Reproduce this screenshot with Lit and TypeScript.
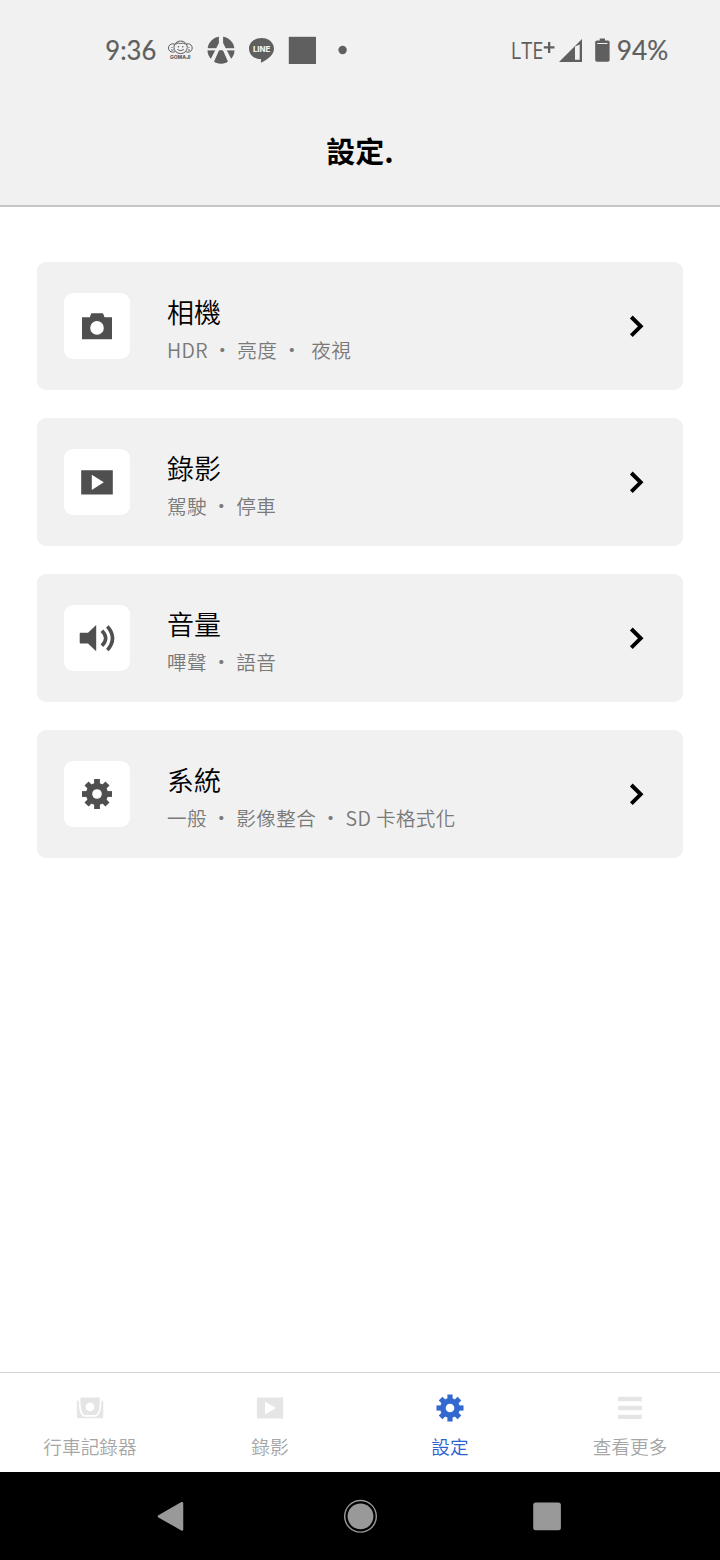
import { LitElement, html, css, svg } from "lit";
import { customElement, property } from "lit/decorators.js";

const gear = svg`
  <mask id="gear-hole"><rect x="-16" y="-16" width="32" height="32" fill="#fff"/><circle r="4.800" fill="#000"/></mask>
  <g mask="url(#gear-hole)" fill="currentColor">
    <circle r="11"/>
    <rect x="-2.900" y="-15" width="5.800" height="30"/>
    <rect x="-15" y="-2.900" width="30" height="5.800"/>
    <g transform="rotate(45)">
      <rect x="-2.900" y="-14.800" width="5.800" height="29.600"/>
      <rect x="-14.800" y="-2.900" width="29.600" height="5.800"/>
    </g>
  </g>`;

const video = svg`<path fill="currentColor" fill-rule="evenodd" d="M-15.800-11.700H15.800V12.500H-15.800ZM-5.200-7.300V8.100L6.800 .3Z"/>`;

const glyphs: Record<string, unknown> = {
  gear,
  video,
  playback: svg`<path fill="currentColor" fill-rule="evenodd" d="M-14.600-11.700H14.600V11.700H-14.600ZM-5.500-7V7.300L6.600 0Z"/>`,
  camera: svg`<path fill="currentColor" fill-rule="evenodd" d="M-15-8.700H-7.200L-6-12.100Q-5.800-12.700-5.200-12.700H5.400Q6-12.700 6.300-12.100L7.500-8.700H15V13.300H-15ZM0-4.900A6.800 6.800 0 1 0 0 8.700A6.800 6.800 0 1 0 0-4.900Z"/>`,
  volume: svg`
    <path fill="currentColor" d="M-17.300-4.300Q-17.300-5.300-16.300-5.300H-9L-.8-13V13.200L-9 5.600H-16.300Q-17.300 5.600-17.300 4.600Z"/>
    <path fill="none" stroke="currentColor" stroke-width="3.600" d="M4.900-7.300Q12.500 .2 4.900 7.700M10.400-11.700Q20.600 .2 10.400 12.100"/>`,
  recorder: svg`
    <path fill="currentColor" fill-rule="evenodd" d="M-9.500-11.700H10C10.700-11.700 10.900-11 10.900-10C10.800 0 9.800 7.800 5 7.800H-5C-9.600 7.800-10.600 0-10.700-10C-10.700-11-10.300-11.700-9.500-11.700ZM0-6A4.800 4.800 0 1 0 0 3.600A4.800 4.800 0 1 0 0-6Z"/>
    <path fill="currentColor" d="M-14.600-8.500L-12.500-7.800C-12.300 2-11 9.700-5 9.700H5C11 9.700 12.400 2 12.700-7.800L14.700-8.500V9.700Q14.700 11.500 12.900 11.500H-12.800Q-14.600 11.500-14.600 9.700Z"/>`,
  menu: svg`<path fill="currentColor" d="M-13.200-12.400H13.200V-7.600H-13.200ZM-13.200-2.400H13.200V2.400H-13.200ZM-13.200 7.400H13.200V12.200H-13.200Z"/>`,
};

@customElement("app-glyph")
class AppGlyph extends LitElement {
  static styles = css`
    :host { display: block; line-height: 0; }
    svg { display: block; width: 100%; height: 100%; }
  `;
  @property() name = "gear";
  render() {
    return html`<svg viewBox="-20 -20 40 40">${glyphs[this.name]}</svg>`;
  }
}

@customElement("status-bar")
class StatusBar extends LitElement {
  static styles = css`
    :host { display: block; height: 100px; }
    svg { display: block; }
    .clock, .percent { font-family: "Lato", sans-serif; font-weight: 400; }
    .network { font-family: "Open Sans", sans-serif; }
    .brand { font-family: "Inter", sans-serif; font-weight: 800; }
  `;
  render() {
    return html`<svg width="720" height="100" viewBox="0 0 720 100" fill="#5f5f5f">
      <text class="clock" x="105.300" y="59.800" font-size="26" textLength="51" lengthAdjust="spacingAndGlyphs" stroke="#5f5f5f" stroke-width=".2">9:36</text>

      <g fill="#f1f1f1" stroke="#5f5f5f" stroke-width="1">
        <circle cx="172.700" cy="48" r="4.200"/><circle cx="188" cy="48" r="4.200"/>
        <ellipse cx="180.600" cy="47.300" rx="6.700" ry="6.300"/>
        <path fill="none" d="M175.500 44.300Q178.300 42 180.600 43.600Q183 42 185.500 44.300M177.500 49.500Q180.600 52 183.800 49.500M171 49.700Q172.500 51 173.600 49.700M188 49.700Q189 51 190 49.700"/>
      </g>
      <circle cx="178.400" cy="46.800" r=".8"/><circle cx="182.800" cy="46.800" r=".8"/>
      <circle cx="172" cy="47.500" r=".6"/><circle cx="189" cy="47.500" r=".6"/>
      <text class="brand" x="170" y="59.200" font-size="5.100" textLength="20.500" lengthAdjust="spacingAndGlyphs">GOMAJI</text>

      <circle cx="221" cy="50" r="13.500"/>
      <path d="M207 49.300H235" stroke="#f1f1f1" stroke-width="2.200"/>
      <path fill="#f1f1f1" d="M218.900 36H223.100V43L232.500 61.500L229 64L222.800 50H219.200L213 64L209.500 61.500L218.900 43Z"/>
      <path d="M219.600 50.500H222.400L227.300 62Q221 65 214.700 62Z"/>

      <path d="M261.500 38C268.700 38 274 42.700 274 48.700C274 55 267.500 59 262.200 62.200C261 62.800 260.700 62 261 60.400L261.200 59.300C254.300 59.200 249 54.700 249 48.700C249 42.700 254.300 38 261.500 38Z"/>
      <text class="brand" x="252.900" y="51.900" font-size="8" fill="#f1f1f1" textLength="17.500" lengthAdjust="spacingAndGlyphs">LINE</text>
      <rect x="288.800" y="36.800" width="27.200" height="27.200"/>
      <circle cx="342.600" cy="50" r="4.200"/>

      <text class="network" x="510.800" y="58.500" font-size="23" textLength="32.500" lengthAdjust="spacingAndGlyphs">LTE</text>
      <path d="M548 42H550.300V46.200H554.500V48.500H550.300V53H548V48.500H543.800V46.200H548Z"/>
      <path fill-rule="evenodd" d="M582 39V62H559ZM575 46.500V59.800H579.700V44.600Z"/>
      <path fill-rule="evenodd" d="M599.700 38.500H605V40.500H608Q609.600 40.500 609.600 42V60Q609.600 61.800 608 61.800H597Q595.200 61.800 595.200 60V42Q595.200 40.500 597 40.500H599.700ZM597.300 43V44H607.500V43Z"/>
      <text class="percent" x="616.700" y="59.800" font-size="26" textLength="51.500" lengthAdjust="spacingAndGlyphs" stroke="#5f5f5f" stroke-width=".2">94%</text>
    </svg>`;
  }
}

@customElement("setting-card")
class SettingCard extends LitElement {
  static styles = css`
    :host { display: flex; align-items: center; box-sizing: border-box; height: 128.300px; padding: 0 38px 0 27.300px; background: #f1f1f1; border-radius: 9px; }
    .tile { display: grid; place-items: center; width: 66px; height: 66px; border-radius: 9px; background: #fff; color: #4f4f4f; }
    .glyph { width: 40px; height: 40px; }
    .copy { flex: 1; margin-left: 37px; padding-top: 3.500px; white-space: pre; }
    .title { font-size: 27px; line-height: 40px; font-weight: 350; color: #000; }
    .detail { font-size: 19.600px; line-height: 28px; letter-spacing: .36px; font-weight: 350; color: #797979; margin-top: 4px; }
    .chevron { display: block; width: 16px; height: 24px; }
  `;
  @property() icon = "";
  @property() heading = "";
  @property() detail = "";
  render() {
    return html`
      <div class="tile"><app-glyph class="glyph" name=${this.icon}></app-glyph></div>
      <div class="copy"><div class="title">${this.heading}</div><div class="detail">${this.detail}</div></div>
      <svg class="chevron" viewBox="0 0 16 24"><path d="M2.300 3L11.700 12.300L2.300 21.600" fill="none" stroke="#000" stroke-width="3.900"/></svg>`;
  }
}

const cards = [
  { icon: "camera", heading: "相機", detail: "HDR ・ 亮度 ・  夜視" },
  { icon: "video", heading: "錄影", detail: "駕駛 ・ 停車" },
  { icon: "volume", heading: "音量", detail: "嗶聲 ・ 語音" },
  { icon: "gear", heading: "系統", detail: "一般 ・ 影像整合 ・ SD 卡格式化" },
];

const tabs = [
  { icon: "recorder", label: "行車記錄器" },
  { icon: "playback", label: "錄影" },
  { icon: "gear", label: "設定", active: true },
  { icon: "menu", label: "查看更多" },
];

@customElement("app-root")
class AppRoot extends LitElement {
  static styles = css`
    :host { display: flex; flex-direction: column; height: 1560px; background: #fff; overflow: hidden; font-family: "Noto Sans CJK TC", sans-serif; }
    .top { box-sizing: border-box; height: 207px; background: #f1f1f1; border-bottom: 2px solid #c6c6c6; }
    .heading { margin: 0; height: 101px; line-height: 101px; text-align: center; font-size: 29px; font-weight: 700; color: #000; }
    .list { flex: 1; display: flex; flex-direction: column; gap: 27.700px; padding: 55.200px 36.700px 0; }
    .tabs { box-sizing: border-box; display: grid; grid-template-columns: repeat(4, 1fr); height: 100px; border-top: 1px solid #d3d3d3; }
    .tab { display: flex; flex-direction: column; align-items: center; padding-top: 17px; color: #e5e5e5; }
    .tab-icon { width: 36px; height: 36px; }
    .label { margin-top: 6px; font-size: 18.700px; line-height: 28px; font-weight: 350; color: #a6a6a6; }
    .active { color: #3269d1; }
    .active .label { color: #2c63d0; }
    .system { height: 88px; background: #000; }
    .system svg { display: block; }
  `;
  render() {
    return html`
      <header class="top"><status-bar></status-bar><h1 class="heading">設定.</h1></header>
      <main class="list">
        ${cards.map((c) => html`<setting-card icon=${c.icon} heading=${c.heading} detail=${c.detail}></setting-card>`)}
      </main>
      <nav class="tabs">
        ${tabs.map((t) => html`<div class="tab ${t.active ? "active" : ""}"><app-glyph class="tab-icon" name=${t.icon}></app-glyph><span class="label">${t.label}</span></div>`)}
      </nav>
      <footer class="system">
        <svg width="720" height="88" viewBox="0 0 720 88" fill="#999">
          <path d="M159 44.300L182 31.200V57.400Z" stroke="#999" stroke-width="2.500" stroke-linejoin="round"/>
          <circle cx="360.500" cy="44.300" r="12.900"/>
          <circle cx="360.500" cy="44.300" r="15.800" fill="none" stroke="#999" stroke-width="1.400"/>
          <rect x="533.200" y="30.600" width="27.700" height="27.700" rx="2.500"/>
        </svg>
      </footer>`;
  }
}
